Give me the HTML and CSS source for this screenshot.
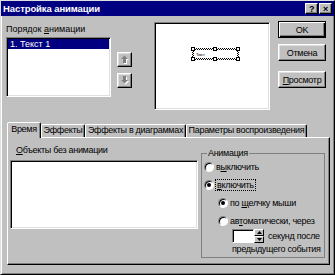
FILE: index.html
```html
<!DOCTYPE html>
<html lang="ru">
<head>
    <meta charset="UTF-8">
    <meta name="viewport" content="width=device-width, initial-scale=1.0">
    <title>Настройка анимации</title>
    <link rel="stylesheet" href="styles.css">
</head>
<body>
    <div class="dialog">
        <div class="titlebar">
            <span class="title">Настройка анимации</span>
            <div class="caption-buttons">
                <button class="cap-btn">?</button>
                <button class="cap-btn">&#215;</button>
            </div>
        </div>

        <div class="top">
            <div class="order">
                <div class="label">Порядок <u>а</u>нимации</div>
                <div class="listbox order-list">
                    <div class="item selected">1. Текст 1</div>
                </div>
            </div>

            <div class="move-btns">
                <button class="btn icon-btn">
                    <svg width="9" height="9" viewBox="0 0 9 9">
                        <path d="M5.5 1.5 L9 5 L7 5 L7 9 L4 9 L4 5 L2 5 Z" fill="#fff"/>
                        <path d="M4.5 0.5 L8 4 L6 4 L6 8 L3 8 L3 4 L1 4 Z" fill="#808080"/>
                    </svg>
                </button>
                <button class="btn icon-btn">
                    <svg width="9" height="9" viewBox="0 0 9 9">
                        <path d="M5.5 8.5 L9 5 L7 5 L7 1 L4 1 L4 5 L2 5 Z" fill="#fff"/>
                        <path d="M4.5 7.5 L8 4 L6 4 L6 0 L3 0 L3 4 L1 4 Z" fill="#808080"/>
                    </svg>
                </button>
            </div>

            <div class="preview">
                <svg width="112" height="84" viewBox="0 0 112 84">
                    <defs>
                        <pattern id="hatch" width="2" height="2" patternUnits="userSpaceOnUse">
                            <rect width="1" height="1" fill="#000"/>
                            <rect x="1" y="1" width="1" height="1" fill="#000"/>
                        </pattern>
                    </defs>
                    <rect x="37" y="25" width="45" height="10" fill="none" stroke="url(#hatch)" stroke-width="2"/>
                    <text x="40" y="32" font-size="4" font-family="Liberation Sans, sans-serif">Текст</text>
                    <g fill="#fff" stroke="#000" stroke-width="1">
                        <rect x="35.5" y="23.5" width="3" height="3"/>
                        <rect x="57.5" y="23.5" width="3" height="3"/>
                        <rect x="80.5" y="23.5" width="3" height="3"/>
                        <rect x="35.5" y="33.5" width="3" height="3"/>
                        <rect x="57.5" y="33.5" width="3" height="3"/>
                        <rect x="80.5" y="33.5" width="3" height="3"/>
                    </g>
                </svg>
            </div>

            <div class="actions">
                <button class="btn default">OK</button>
                <button class="btn cancel">Отмена</button>
                <button class="btn show"><u>П</u>росмотр</button>
            </div>
        </div>

        <div class="tabs">
            <div class="tab active tab-time">Время</div>
            <div class="tab tab-effects">Эффекты</div>
            <div class="tab tab-charts">Эффекты в диаграммах</div>
            <div class="tab tab-play">Параметры воспроизведения</div>
        </div>

        <div class="panel">
            <div class="objects">
                <div class="label"><u>О</u>бъекты без анимации</div>
                <div class="listbox objects-list"></div>
            </div>

            <fieldset class="group">
                <legend>Анимация</legend>
                <div class="radio-row first">
                    <span class="radio"></span>
                    <span>в<u>ы</u>ключить</span>
                </div>
                <div class="radio-row">
                    <span class="radio checked"></span>
                    <span class="focus"><u>в</u>ключить</span>
                </div>
                <div class="radio-row sub">
                    <span class="radio checked"></span>
                    <span>по <u>щ</u>елчку мыши</span>
                </div>
                <div class="radio-row sub">
                    <span class="radio"></span>
                    <span>ав<u>т</u>оматически, через</span>
                </div>
                <div class="spin-row">
                    <div class="spin">
                        <div class="spin-field"></div>
                        <div class="spin-btns">
                            <span class="spin-btn"><svg width="5" height="3" viewBox="0 0 5 3"><path d="M2.5 0 L5 3 L0 3 Z" fill="#000"/></svg></span>
                            <span class="spin-btn"><svg width="5" height="3" viewBox="0 0 5 3"><path d="M0 0 L5 0 L2.5 3 Z" fill="#000"/></svg></span>
                        </div>
                    </div>
                    <span class="spin-text">секунд после</span>
                </div>
                <div class="after-line">предыдущего события</div>
            </fieldset>
        </div>
    </div>
</body>
</html>
```

FILE: styles.css
```css
* {
    margin: 0;
    padding: 0;
    box-sizing: border-box;
}

body {
    font-family: "Liberation Sans", Arial, sans-serif;
    font-size: 9px;
    letter-spacing: -0.3px;
    background: #c0c0c0;
    color: #000;
    white-space: nowrap;
}

button {
    font: inherit;
    color: inherit;
    letter-spacing: inherit;
}

.dialog {
    width: 335px;
    height: 275px;
    background: #c0c0c0;
    border: 1px solid;
    border-color: #dfdfdf #000 #000 #dfdfdf;
    box-shadow: inset 1px 1px #fff, inset -1px -1px #808080;
}

/* title bar */
.titlebar {
    height: 15px;
    background: #000080;
    color: #fff;
    display: flex;
    align-items: center;
    justify-content: space-between;
    padding: 0 2px;
}

.title {
    font-weight: bold;
    font-size: 9.5px;
    letter-spacing: -0.1px;
}

.caption-buttons {
    display: flex;
    gap: 1px;
}

.cap-btn {
    width: 13px;
    height: 11px;
    background: #c0c0c0;
    color: #000;
    font-weight: bold;
    font-size: 9px;
    line-height: 8px;
    border: 1px solid;
    border-color: #fff #000 #000 #fff;
    box-shadow: inset -1px -1px #808080;
}

/* 3d controls */
.btn {
    background: #c0c0c0;
    border: 1px solid;
    border-color: #fff #000 #000 #fff;
    box-shadow: inset -1px -1px #808080, inset 1px 1px #dfdfdf;
}

.btn.default {
    border-color: #000;
    box-shadow: inset 1px 1px #fff, inset -1px -1px #000, inset -2px -2px #808080;
}

.listbox {
    background: #fff;
    border: 1px solid;
    border-color: #808080 #fff #fff #808080;
    box-shadow: inset 1px 1px #000, inset -1px -1px #dfdfdf;
    padding: 1px;
}

.label {
    line-height: 12px;
}

/* top area */
.top {
    display: flex;
    align-items: flex-start;
    height: 94px;
}

.order {
    margin: 7px 0 0 5px;
}

.order .label {
    letter-spacing: 0;
}

.order-list {
    width: 105px;
    height: 60px;
    margin-top: 2px;
}

.item {
    height: 10px;
    line-height: 10px;
    padding-left: 2px;
    letter-spacing: 0;
}

.item.selected {
    background: #000080;
    color: #fff;
}

.move-btns {
    display: flex;
    flex-direction: column;
    gap: 6px;
    margin: 36px 0 0 6px;
}

.icon-btn {
    width: 15px;
    height: 15px;
    display: flex;
    align-items: center;
    justify-content: center;
}

.preview {
    width: 116px;
    height: 88px;
    margin: 6px 0 0 22px;
    background: #fff;
    border: 1px solid;
    border-color: #808080 #fff #fff #808080;
    box-shadow: inset 1px 1px #000, inset -1px -1px #dfdfdf;
    padding: 1px;
}

.preview svg {
    display: block;
}

.actions {
    display: flex;
    flex-direction: column;
    width: 48px;
    margin: 5px 0 0 8px;
}

.actions .btn {
    height: 17px;
}

.actions .cancel {
    margin-top: 6px;
}

.actions .show {
    margin-top: 10px;
}

/* tabs */
.tabs {
    display: flex;
    align-items: flex-end;
    height: 15px;
    margin: 12px 0 0 6px;
}

.tab {
    flex-shrink: 0;
    height: 13px;
    line-height: 11px;
    text-align: center;
    border: 1px solid;
    border-bottom: none;
    border-color: #fff #000 transparent #fff;
    border-radius: 2px 2px 0 0;
    box-shadow: inset -1px 0 #808080;
}

.tab.active {
    height: 16px;
    line-height: 12px;
    margin-bottom: -1px;
    position: relative;
    z-index: 1;
    background: #c0c0c0;
}

.tab-time {
    width: 34px;
}

.tab-effects {
    width: 44px;
}

.tab-charts {
    width: 101px;
}

.tab-play {
    width: 121px;
}

.panel {
    width: 323px;
    height: 128px;
    margin-left: 6px;
    display: flex;
    align-items: flex-start;
    border: 1px solid;
    border-color: #fff #000 #000 #fff;
    box-shadow: inset -1px -1px #808080;
}

.objects {
    margin: 6px 0 0 2px;
}

.objects .label {
    padding-left: 6px;
}

.objects-list {
    width: 188px;
    height: 69px;
    margin-top: 4px;
}

/* group box */
.group {
    width: 124px;
    height: 111px;
    margin: 9px 0 0 3px;
    border: 1px solid #808080;
    padding: 0 0 0 2px;
}

.group legend {
    line-height: 12px;
    padding: 0 1px;
    margin-left: 3px;
}

.radio-row {
    display: flex;
    align-items: center;
    gap: 2px;
    height: 12px;
    margin-top: 6px;
}

.radio-row.first {
    margin-top: 2px;
}

.radio-row.sub {
    margin-left: 14px;
}

.radio {
    flex-shrink: 0;
    width: 10px;
    height: 10px;
    border-radius: 50%;
    background: #fff;
    border: 1px solid;
    border-color: #808080 #fff #fff #808080;
    box-shadow: inset 1px 1px #000;
    display: flex;
    align-items: center;
    justify-content: center;
}

.radio.checked::after {
    content: "";
    width: 4px;
    height: 4px;
    border-radius: 50%;
    background: #000;
}

.focus {
    outline: 1px dotted #000;
    outline-offset: 0;
    padding: 0 1px;
}

.spin-row {
    display: flex;
    align-items: center;
    margin: 2px 0 0 28px;
}

.spin {
    display: flex;
    flex-shrink: 0;
    width: 32px;
    height: 14px;
}

.spin-field {
    width: 22px;
    height: 14px;
    background: #fff;
    border: 1px solid;
    border-color: #808080 #fff #fff #808080;
    box-shadow: inset 1px 1px #000;
}

.spin-btns {
    display: flex;
    flex-direction: column;
    width: 10px;
}

.spin-btn {
    height: 7px;
    display: flex;
    align-items: center;
    justify-content: center;
    background: #c0c0c0;
    border: 1px solid;
    border-color: #fff #000 #000 #fff;
}

.spin-btn svg {
    display: block;
}

.spin-text {
    margin-left: 4px;
}

.after-line {
    line-height: 12px;
    margin-left: 28px;
}
```
